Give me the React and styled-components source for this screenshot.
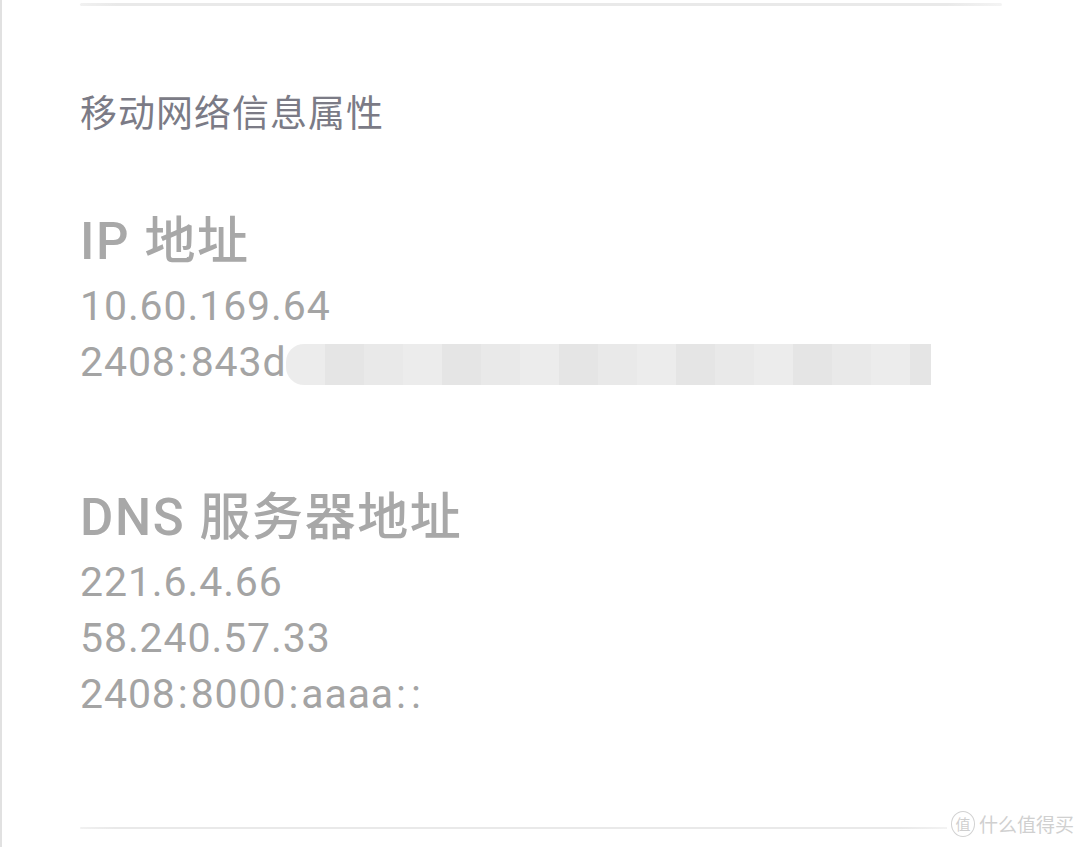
import React from "react";
import styled, { createGlobalStyle } from "styled-components";

const Global = createGlobalStyle`
  html, body { margin: 0; padding: 0; background: #ffffff; }
  body { font-family: Roboto, "Noto Sans CJK SC", sans-serif; }
`;

const Page = styled.div`
  position: relative;
  box-sizing: border-box;
  width: 1080px;
  height: 847px;
  overflow: hidden;
  border-left: 2px solid #e1e1e1;
  padding: 3px 0 0 78px;
  background: #ffffff;
  display: flex;
  flex-direction: column;
`;

const Rule = styled.div`
  height: ${(p) => p.$h || 3}px;
  width: ${(p) => p.$w}px;
  background: linear-gradient(90deg, #f1f1f1 0%, #e9e9e9 4%, #e9e9e9 94%, #f4f4f4 100%);
  border-radius: 2px;
  flex: none;
`;

const SectionTitle = styled.div`
  margin-top: 81px;
  font-family: "Noto Sans CJK SC", sans-serif;
  font-size: 37px;
  line-height: 48px;
  color: #7b7b86;
  letter-spacing: 1px;
`;

const Group = styled.section`
  display: flex;
  flex-direction: column;
  margin-top: ${(p) => p.$top}px;
`;

const Heading = styled.h2`
  margin: 0 0 6px;
  font-family: Roboto, "Noto Sans CJK SC", sans-serif;
  font-weight: 500;
  font-size: 51px;
  line-height: 60px;
  letter-spacing: 1.6px;
  color: #a8a8a8;
  white-space: nowrap;
`;

const Value = styled.div`
  font-family: Roboto, "Noto Sans CJK SC", sans-serif;
  font-size: 41px;
  line-height: 56px;
  letter-spacing: 0.9px;
  color: #a4a4a4;
  white-space: nowrap;
  display: flex;
  align-items: center;
`;

const Colon = styled.span`
  margin: 0 2px;
`;

const Redacted = styled.span`
  display: inline-block;
  width: 645px;
  height: 41px;
  margin-top: 4px;
  border-radius: 18px 0 0 18px;
  background: repeating-linear-gradient(
    90deg,
    #ececec 0px,
    #ececec 39px,
    #e5e5e5 39px,
    #e5e5e5 78px,
    #e9e9e9 78px,
    #e9e9e9 117px
  );
`;

const Footer = styled.div`
  margin-top: auto;
  margin-bottom: 18px;
`;

const Watermark = styled.div`
  position: absolute;
  right: 6px;
  bottom: 10px;
  display: flex;
  align-items: center;
  gap: 4px;
  font-family: "Noto Sans CJK SC", sans-serif;
  font-size: 19px;
  color: #d0d0d0;
  background: #ffffff;
  padding-left: 4px;
`;

const Badge = styled.span`
  display: inline-flex;
  align-items: center;
  justify-content: center;
  width: 22px;
  height: 24px;
  border: 1.5px solid #d2d2d2;
  border-radius: 50%;
  font-size: 15px;
  color: #cfcfcf;
`;

function Addr({ text, children }) {
  const parts = text.split(":");
  return (
    <Value>
      {parts.map((p, i) => (
        <React.Fragment key={i}>
          {i > 0 && <Colon>:</Colon>}
          {p}
        </React.Fragment>
      ))}
      {children}
    </Value>
  );
}

export default function App() {
  return (
    <>
      <Global />
      <Page>
        <Rule $w={922} $h={3} />
        <SectionTitle>移动网络信息属性</SectionTitle>
        <Group $top={77}>
          <Heading>IP 地址</Heading>
          <Addr text="10.60.169.64" />
          <Addr text="2408:843d">
            <Redacted />
          </Addr>
        </Group>
        <Group $top={98}>
          <Heading>DNS 服务器地址</Heading>
          <Addr text="221.6.4.66" />
          <Addr text="58.240.57.33" />
          <Addr text="2408:8000:aaaa::" />
        </Group>
        <Footer>
          <Rule $w={872} $h={2} />
        </Footer>
        <Watermark>
          <Badge>值</Badge>
          什么值得买
        </Watermark>
      </Page>
    </>
  );
}
